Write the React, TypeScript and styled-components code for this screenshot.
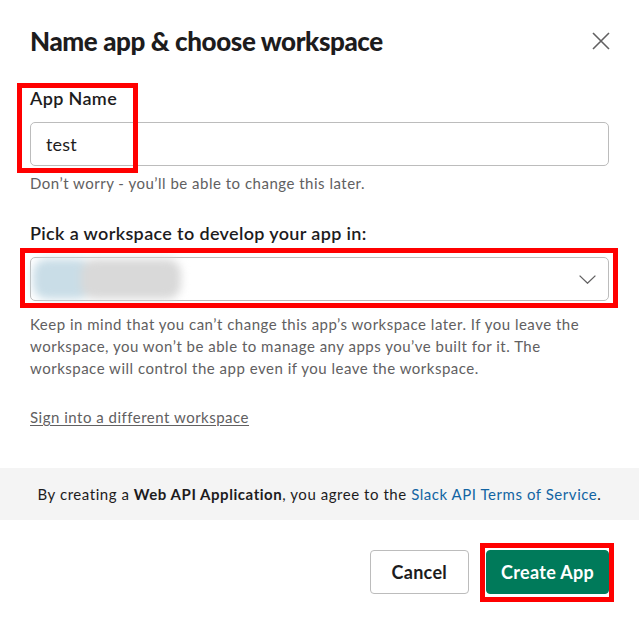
import React from "react";
import styled, { createGlobalStyle } from "styled-components";

const GlobalStyle = createGlobalStyle`
  * { box-sizing: border-box; }
  html, body { margin: 0; padding: 0; background: #ffffff; }
  body {
    font-family: Lato, "Noto Sans", "Liberation Sans", sans-serif;
    color: #1d1c1d;
    -webkit-font-smoothing: antialiased;
  }
`;

const Dialog = styled.div`
  width: 639px;
  min-height: 618px;
  background: #ffffff;
  display: flex;
  flex-direction: column;
`;

const Header = styled.header`
  display: flex;
  align-items: center;
  justify-content: space-between;
  padding: 23px 30px 0 30px;
`;

const Title = styled.h1`
  margin: 0;
  font-size: 26px;
  line-height: 36px;
  font-weight: 900;
  letter-spacing: -0.4px;
  color: #1d1c1d;
`;

const CloseButton = styled.button`
  width: 26px;
  height: 26px;
  margin-right: -5px;
  padding: 0;
  border: none;
  background: transparent;
  display: flex;
  align-items: center;
  justify-content: center;
  cursor: pointer;
`;

const Body = styled.div`
  padding: 0 30px;
  display: flex;
  flex-direction: column;
`;

const Field = styled.div<{ $top: number }>`
  position: relative;
  display: flex;
  flex-direction: column;
  margin-top: ${(p) => p.$top}px;
`;

const Label = styled.label`
  font-size: 18px;
  line-height: 24px;
  font-weight: 600;
  letter-spacing: 0.35px;
  color: #1d1c1d;
  margin-bottom: 12px;
`;

const TextInput = styled.div`
  height: 44px;
  border: 1px solid #bcbcbc;
  border-radius: 5px;
  padding: 0 15px;
  display: flex;
  align-items: center;
  font-size: 18px;
  letter-spacing: 0.2px;
  color: #1d1c1d;
`;

const SelectBox = styled.div`
  height: 44px;
  border: 1px solid #bcbcbc;
  border-radius: 5px;
  padding: 0 12px 0 0;
  display: flex;
  align-items: center;
  justify-content: space-between;
  overflow: visible;
`;

const BlurredName = styled.div`
  display: flex;
  align-items: center;
  height: 44px;
  filter: blur(4px);
`;

const Blob = styled.span<{ $w: number; $bg: string; $shift: number }>`
  display: block;
  width: ${(p) => p.$w}px;
  height: 40px;
  border-radius: 14px;
  background: ${(p) => p.$bg};
  margin-left: ${(p) => p.$shift}px;
`;

const Hint = styled.p<{ $top: number }>`
  margin: ${(p) => p.$top}px 0 0 0;
  font-size: 15px;
  line-height: 22px;
  letter-spacing: 0.5px;
  color: #616061;
`;

const Link = styled.a`
  margin-top: 27px;
  align-self: flex-start;
  font-size: 15px;
  line-height: 22px;
  letter-spacing: 0.5px;
  color: #616061;
  text-decoration: underline;
  text-underline-offset: 2px;
`;

const Highlight = styled.div<{ $t: number; $l: number; $w: number; $h: number }>`
  position: absolute;
  top: ${(p) => p.$t}px;
  left: ${(p) => p.$l}px;
  width: ${(p) => p.$w}px;
  height: ${(p) => p.$h}px;
  border: 5px solid #ff0000;
  pointer-events: none;
`;

const TermsBar = styled.div`
  margin-top: 40px;
  height: 52px;
  background: #f4f4f4;
  display: flex;
  align-items: center;
  justify-content: center;
  font-size: 15px;
  letter-spacing: 0.55px;
  color: #1d1c1d;
`;

const Strong = styled.b`
  font-weight: 700;
`;

const TermsLink = styled.a`
  color: #1264a3;
  text-decoration: none;
`;

const Actions = styled.div`
  display: flex;
  justify-content: flex-end;
  gap: 17px;
  padding: 30px 30px 0 30px;
`;

const ButtonWrap = styled.div`
  position: relative;
`;

const Button = styled.button<{ $primary?: boolean }>`
  height: 44px;
  padding: 0 ${(p) => (p.$primary ? "14px" : "21px")};
  border-radius: 4px;
  font-family: inherit;
  font-size: 18px;
  font-weight: 700;
  letter-spacing: 0.3px;
  cursor: pointer;
  border: 1px solid ${(p) => (p.$primary ? "#007a5a" : "#bcbcbc")};
  background: ${(p) => (p.$primary ? "#007a5a" : "#ffffff")};
  color: ${(p) => (p.$primary ? "#ffffff" : "#1d1c1d")};
`;

const CloseIcon = () => (
  <svg width="18" height="18" viewBox="0 0 18 18" fill="none">
    <path d="M1 1L17 17M17 1L1 17" stroke="#616061" strokeWidth="1.6" />
  </svg>
);

const ChevronIcon = () => (
  <svg width="17" height="9" viewBox="0 0 17 9" fill="none">
    <path d="M0.6 0.6L8.5 8.2L16.4 0.6" stroke="#616061" strokeWidth="1.3" />
  </svg>
);

export default function App() {
  return (
    <>
      <GlobalStyle />
      <Dialog>
        <Header>
          <Title>Name app &amp; choose workspace</Title>
          <CloseButton aria-label="Close">
            <CloseIcon />
          </CloseButton>
        </Header>
        <Body>
          <Field $top={27}>
            <Label>App Name</Label>
            <TextInput>test</TextInput>
            <Highlight $t={-3} $l={-13} $w={121} $h={90} />
          </Field>
          <Hint $top={6}>Don’t worry - you’ll be able to change this later.</Hint>

          <Field $top={27}>
            <Label>Pick a workspace to develop your app in:</Label>
            <SelectBox>
              <BlurredName>
                <Blob $w={60} $bg="#c9dde7" $shift={2} />
                <Blob $w={100} $bg="#d9d9d9" $shift={-12} />
              </BlurredName>
              <ChevronIcon />
            </SelectBox>
            <Highlight $t={27} $l={-10} $w={598} $h={60} />
          </Field>
          <Hint $top={12}>
            Keep in mind that you can’t change this app’s workspace later. If you leave the
            workspace, you won’t be able to manage any apps you’ve built for it. The
            workspace will control the app even if you leave the workspace.
          </Hint>
          <Link href="#">Sign into a different workspace</Link>
        </Body>
        <TermsBar>
          <span>
            By creating a <Strong>Web API Application</Strong>, you agree to the{" "}
            <TermsLink href="#">Slack API Terms of Service</TermsLink>.
          </span>
        </TermsBar>
        <Actions>
          <ButtonWrap>
            <Button>Cancel</Button>
          </ButtonWrap>
          <ButtonWrap>
            <Button $primary>Create App</Button>
            <Highlight $t={-7} $l={-6} $w={134} $h={59} />
          </ButtonWrap>
        </Actions>
      </Dialog>
    </>
  );
}
